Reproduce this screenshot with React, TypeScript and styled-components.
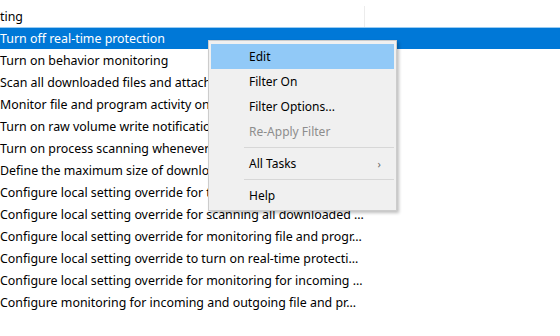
import React from 'react';
import styled, { createGlobalStyle } from 'styled-components';

const GlobalStyle = createGlobalStyle`
    html, body {
        margin: 0;
        padding: 0;
        background: #ffffff;
        overflow: hidden;
    }
`;

const Page = styled.div`
    position: relative;
    width: 560px;
    height: 336px;
    overflow: hidden;
    background: #ffffff;
    font-family: "Noto Sans", "Open Sans", sans-serif;
    font-size: 12px;
    color: #000000;
`;

const List = styled.div`
    display: flex;
    flex-direction: column;
    padding-top: 5px;
    font-size: 12.4px;
`;

const Row = styled.div<{ $selected?: boolean }>`
    display: flex;
    height: 22px;
    box-sizing: border-box;
    align-items: center;
    background: ${p => (p.$selected ? '#0078d7' : 'transparent')};
    border-top: 1px solid ${p => (p.$selected ? '#99ccf3' : 'transparent')};
    color: ${p => (p.$selected ? '#ffffff' : '#000000')};
`;

const Cell = styled.div<{ $divider?: boolean }>`
    width: 365px;
    height: 100%;
    display: flex;
    align-items: center;
    box-sizing: border-box;
    white-space: nowrap;
    overflow: hidden;
    border-right: 1px solid ${p => (p.$divider ? '#ececec' : 'transparent')};
`;

const Menu = styled.div`
    position: absolute;
    left: 208px;
    top: 40px;
    width: 189px;
    box-sizing: border-box;
    padding: 3px 2px 2px 2px;
    background: #f0f0f0;
    border: 1px solid #cccccc;
    box-shadow: 2px 2px 3px rgba(0, 0, 0, 0.25);
    display: flex;
    flex-direction: column;
`;

const Item = styled.div<{ $active?: boolean; $disabled?: boolean }>`
    position: relative;
    height: 25px;
    box-sizing: border-box;
    display: flex;
    align-items: center;
    padding-left: 37px;
    background: ${p => (p.$active ? '#91c9f7' : 'transparent')};
    border: 1px solid ${p => (p.$active ? '#91c9f7' : 'transparent')};
    color: ${p => (p.$disabled ? '#8d8d8d' : '#000000')};
`;

const Arrow = styled.span`
    position: absolute;
    right: 12px;
    top: 4px;
    font-size: 11px;
    color: #6d6d6d;
`;

const Separator = styled.div`
    height: 7px;
    margin-left: 33px;
    display: flex;
    align-items: center;

    &::before {
        content: '';
        flex: 1;
        height: 1px;
        background: #d7d7d7;
    }
`;

const rows = [
    'ting',
    'Turn off real-time protection',
    'Turn on behavior monitoring',
    'Scan all downloaded files and attachments',
    'Monitor file and program activity on your computer',
    'Turn on raw volume write notifications',
    'Turn on process scanning whenever real-time protection is enabled',
    'Define the maximum size of downloaded files and attachments to be scanned',
    'Configure local setting override for turn on behavior monitoring',
    'Configure local setting override for scanning all downloaded …',
    'Configure local setting override for monitoring file and progr…',
    'Configure local setting override to turn on real-time protecti…',
    'Configure local setting override for monitoring for incoming …',
    'Configure monitoring for incoming and outgoing file and pr…',
];

export default function App() {
    return (
        <Page>
            <GlobalStyle />
            <List>
                {rows.map((text, i) => (
                    <Row key={i} $selected={i === 1}>
                        <Cell $divider={i === 0}>{text}</Cell>
                    </Row>
                ))}
            </List>
            <Menu>
                <Item $active>Edit</Item>
                <Item>Filter On</Item>
                <Item>Filter Options...</Item>
                <Item $disabled>Re-Apply Filter</Item>
                <Separator />
                <Item>
                    All Tasks
                    <Arrow>›</Arrow>
                </Item>
                <Separator />
                <Item>Help</Item>
            </Menu>
        </Page>
    );
}
